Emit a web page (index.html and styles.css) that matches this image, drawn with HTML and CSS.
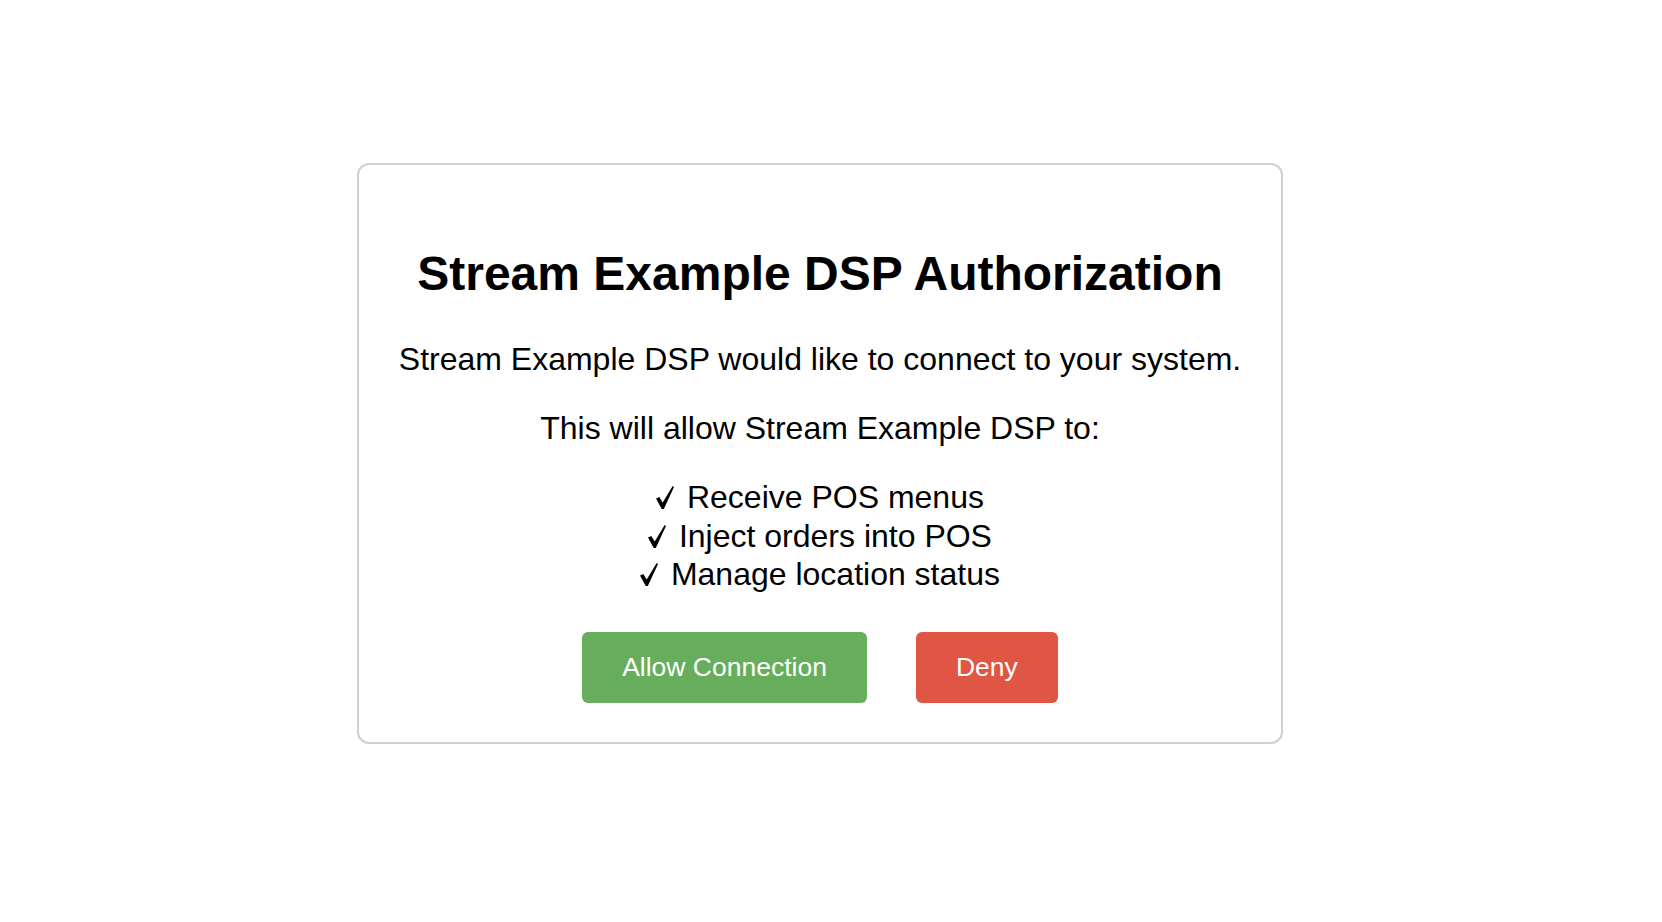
FILE: index.html
```html
<!DOCTYPE html>
<html lang="en">
<head>
<meta charset="utf-8">
<title>Stream Example DSP Authorization</title>
<link rel="stylesheet" href="styles.css">
</head>
<body>
<main class="page">
  <section class="card">
    <h1 class="title">Stream Example DSP Authorization</h1>
    <p class="text">Stream Example DSP would like to connect to your system.</p>
    <p class="text">This will allow Stream Example DSP to:</p>
    <ul class="perms">
      <li><svg class="check" viewBox="0 0 18 23" aria-hidden="true"><path d="M0 12.6 L3.3 10.9 L6.7 16.4 L16.7 0 L18 1 L7.8 23 L5.7 23 Z"/></svg> Receive POS menus</li>
      <li><svg class="check" viewBox="0 0 18 23" aria-hidden="true"><path d="M0 12.6 L3.3 10.9 L6.7 16.4 L16.7 0 L18 1 L7.8 23 L5.7 23 Z"/></svg> Inject orders into POS</li>
      <li><svg class="check" viewBox="0 0 18 23" aria-hidden="true"><path d="M0 12.6 L3.3 10.9 L6.7 16.4 L16.7 0 L18 1 L7.8 23 L5.7 23 Z"/></svg> Manage location status</li>
    </ul>
    <div class="actions">
      <button class="btn btn-allow" type="button">Allow Connection</button>
      <button class="btn btn-deny" type="button">Deny</button>
    </div>
  </section>
</main>
</body>
</html>
```

FILE: styles.css
```css
html, body {
  margin: 0;
  padding: 0;
  background: #ffffff;
}

body {
  font-family: "Liberation Sans", Arial, Helvetica, sans-serif;
  color: #000000;
}

.page {
  padding-top: 163px;
  padding-left: 357px;
}

.card {
  box-sizing: border-box;
  width: 926px;
  height: 581px;
  border: 2px solid #cfcfcf;
  border-radius: 12px;
  padding: 80px 30px 40px;
  text-align: center;
}

.title {
  margin: 0 0 37px;
  font-size: 48px;
  line-height: 1.2;
  font-weight: 700;
}

.text {
  margin: 0 0 31px;
  font-size: 32px;
  line-height: 1.2;
}

.perms {
  list-style: none;
  margin: 0 0 38px;
  padding: 0;
  font-size: 32px;
  line-height: 1.2;
}

.check {
  width: 18px;
  height: 23px;
  margin-right: 4px;
  vertical-align: -1px;
  fill: #000000;
}

.actions {
  display: flex;
  justify-content: center;
  gap: 49px;
}

.btn {
  font-family: "Liberation Sans", Arial, Helvetica, sans-serif;
  font-size: 26.5px;
  line-height: 1.2;
  color: #ffffff;
  border: none;
  border-radius: 6px;
  padding: 20px 40px;
  cursor: pointer;
}

.btn-allow {
  background: #67ae5c;
}

.btn-deny {
  background: #e05543;
}
```
